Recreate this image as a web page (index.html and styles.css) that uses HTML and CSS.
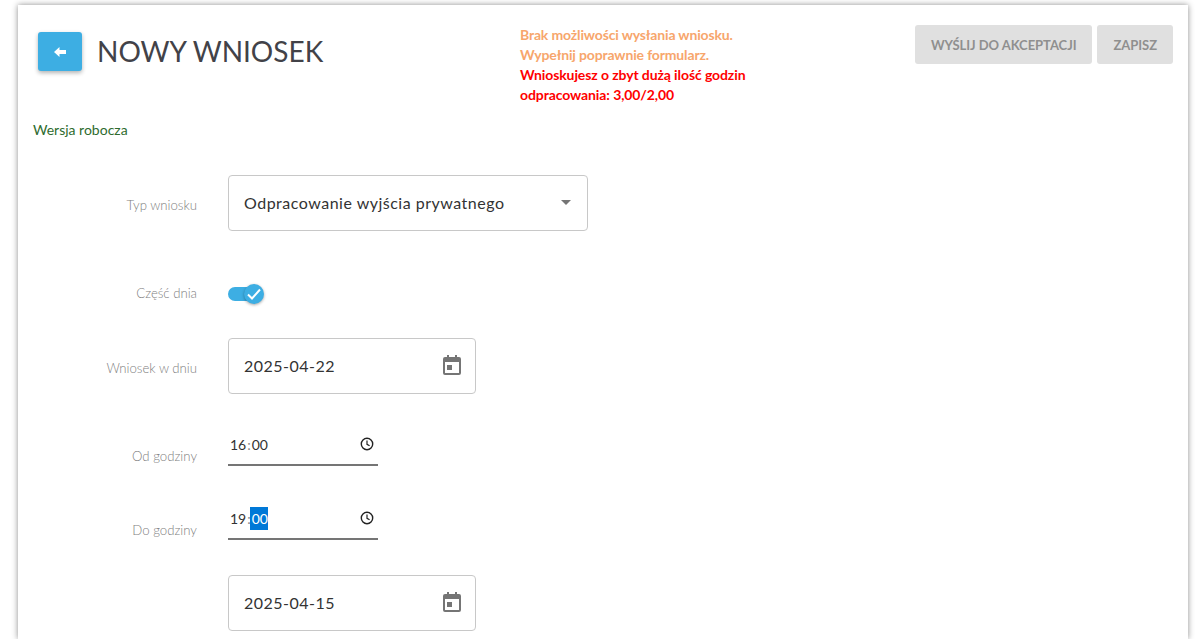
FILE: index.html
```html
<!DOCTYPE html>
<html lang="pl">
<head>
    <meta charset="UTF-8">
    <meta name="viewport" content="width=device-width, initial-scale=1.0">
    <title>Nowy wniosek</title>
    <link rel="stylesheet" href="styles.css">
</head>
<body>
    <div class="card">
        <div class="header">
            <div class="title-box">
                <button class="back-btn" type="button">
                    <svg width="12" height="10" viewBox="0 0 12 10"><path d="M0 5 L5.5 0 V3 H12 V7 H5.5 V10 Z" fill="#fff"/></svg>
                </button>
                <h1 class="title">NOWY WNIOSEK</h1>
            </div>
            <div class="messages">
                <div class="msg-warning">Brak możliwości wysłania wniosku.<br>Wypełnij poprawnie formularz.</div>
                <div class="msg-error">Wnioskujesz o zbyt dużą ilość godzin odpracowania: 3,00/2,00</div>
            </div>
            <div class="actions">
                <button class="action-btn" type="button">WYŚLIJ DO AKCEPTACJI</button>
                <button class="action-btn" type="button">ZAPISZ</button>
            </div>
        </div>

        <div class="status">Wersja robocza</div>

        <div class="form">
            <div class="row row-select">
                <div class="label">Typ wniosku</div>
                <div class="field field-select">
                    <span>Odpracowanie wyjścia prywatnego</span>
                    <span class="caret"></span>
                </div>
            </div>

            <div class="row row-toggle">
                <div class="label">Część dnia</div>
                <div class="toggle">
                    <div class="toggle-track"></div>
                    <div class="toggle-knob">
                        <svg width="14" height="12" viewBox="0 0 14 12"><path d="M1 6.5 L5 10.5 L13 1.5" fill="none" stroke="#fff" stroke-width="2"/></svg>
                    </div>
                </div>
            </div>

            <div class="row row-date">
                <div class="label">Wniosek w dniu</div>
                <div class="field field-date">
                    <span>2025-04-22</span>
                    <svg class="cal-icon" width="18" height="20" viewBox="0 0 18 20"><path d="M4 0h2v2h6V0h2v2h2a2 2 0 0 1 2 2v14a2 2 0 0 1-2 2H2a2 2 0 0 1-2-2V4a2 2 0 0 1 2-2h2zM2 7v11h14V7zm2 3h5v5H4z" fill="#757575" fill-rule="evenodd"/></svg>
                </div>
            </div>

            <div class="row row-time">
                <div class="label">Od godziny</div>
                <div class="time">
                    <span class="time-value">16<span class="time-sep">:</span>00</span>
                    <svg width="14" height="14" viewBox="0 0 14 14"><circle cx="7" cy="7" r="5.7" fill="none" stroke="#222" stroke-width="1.4"/><path d="M7 3.5V7.3L9.6 8.8" fill="none" stroke="#222" stroke-width="1.2"/></svg>
                </div>
            </div>

            <div class="row row-time">
                <div class="label">Do godziny</div>
                <div class="time">
                    <span class="time-value">19<span class="time-sep">:</span><span class="time-selected">00</span></span>
                    <svg width="14" height="14" viewBox="0 0 14 14"><circle cx="7" cy="7" r="5.7" fill="none" stroke="#222" stroke-width="1.4"/><path d="M7 3.5V7.3L9.6 8.8" fill="none" stroke="#222" stroke-width="1.2"/></svg>
                </div>
            </div>

            <div class="row row-date">
                <div class="label"></div>
                <div class="field field-date">
                    <span>2025-04-15</span>
                    <svg class="cal-icon" width="18" height="20" viewBox="0 0 18 20"><path d="M4 0h2v2h6V0h2v2h2a2 2 0 0 1 2 2v14a2 2 0 0 1-2 2H2a2 2 0 0 1-2-2V4a2 2 0 0 1 2-2h2zM2 7v11h14V7zm2 3h5v5H4z" fill="#757575" fill-rule="evenodd"/></svg>
                </div>
            </div>
        </div>
    </div>
</body>
</html>
```

FILE: styles.css
```css
html, body {
    height: 100%;
}

body {
    margin: 0;
    padding: 5px 7px 0 18px;
    box-sizing: border-box;
    background-color: white;
    font-family: 'Lato', sans-serif;
    overflow: hidden;
}

.card {
    background-color: white;
    height: 634px;
    padding: 20px 15px 0 15px;
    box-sizing: border-box;
    box-shadow: 0 0 6px rgba(0, 0, 0, 0.45);
}

.header {
    display: flex;
    align-items: flex-start;
}

.title-box {
    display: flex;
    align-items: center;
    width: 487px;
    padding: 7px 0 0 5px;
    box-sizing: border-box;
}

.back-btn {
    width: 44px;
    height: 39px;
    margin-right: 15px;
    border: none;
    border-radius: 3px;
    background-color: #3daee3;
    box-shadow: 0 2px 4px rgba(0, 0, 0, 0.3);
    display: flex;
    justify-content: center;
    align-items: center;
    padding: 0;
}

.title {
    margin: 0;
    font-size: 28px;
    font-weight: 400;
    color: #424248;
    line-height: 39px;
}

.messages {
    width: 240px;
    font-size: 14px;
    font-weight: 700;
    line-height: 20px;
    letter-spacing: -0.1px;
}

.msg-warning {
    color: #f7a66c;
    letter-spacing: -0.15px;
}

.msg-error {
    color: #ff0000;
}

.actions {
    display: flex;
    gap: 5px;
    margin-left: auto;
}

.action-btn {
    height: 39px;
    padding: 0 16px;
    border: none;
    border-radius: 3px;
    background-color: #e0e0e0;
    color: #8f8f8f;
    font-family: 'Lato', sans-serif;
    font-size: 13px;
    font-weight: 700;
    letter-spacing: -0.05px;
}

.status {
    margin-top: 15px;
    font-size: 14px;
    line-height: 20px;
    color: #2e6b2e;
}

.form {
    margin-top: 35px;
}

.row {
    display: flex;
}

.label {
    width: 164px;
    margin-right: 31px;
    text-align: right;
    font-size: 13.2px;
    font-weight: 300;
    color: #808080;
    flex-shrink: 0;
}

.field {
    height: 56px;
    box-sizing: border-box;
    padding: 0 15px 2px;
    border: 1px solid #c8c8c8;
    border-radius: 4px;
    display: flex;
    align-items: center;
    justify-content: space-between;
    font-size: 16px;
    letter-spacing: 0.5px;
    color: #333;
}

.field-select {
    width: 360px;
}

.field-date {
    width: 248px;
    padding-right: 14px;
}

.row-select, .row-date {
    align-items: center;
}

.row-select .label, .row-date .label {
    padding-top: 4px;
}

.row-select {
    margin-bottom: 51px;
}

.row-toggle {
    align-items: center;
    height: 24px;
    margin-bottom: 32px;
}

.row-toggle .label {
    padding-bottom: 2px;
}

.row-date {
    margin-bottom: 33px;
}

.row-time {
    height: 39px;
    margin-bottom: 35px;
    align-items: flex-end;
}

.row-time .label {
    padding-bottom: 2px;
}

.caret {
    width: 0;
    height: 0;
    margin-right: 1px;
    border-left: 5px solid transparent;
    border-right: 5px solid transparent;
    border-top: 5px solid #757575;
}

.toggle {
    position: relative;
    width: 36px;
    height: 24px;
}

.toggle-track {
    width: 26px;
    height: 14px;
    margin-top: 5px;
    border-radius: 7px;
    background-color: #3daee3;
}

.toggle-knob {
    position: absolute;
    top: 2px;
    left: 16px;
    width: 20px;
    height: 20px;
    border-radius: 50%;
    background-color: #3daee3;
    box-shadow: 0 1px 3px rgba(0, 0, 0, 0.35);
    display: flex;
    justify-content: center;
    align-items: center;
}

.time {
    width: 150px;
    height: 39px;
    box-sizing: border-box;
    padding: 0 4px 3px 2px;
    border-bottom: 2px solid #757575;
    display: flex;
    justify-content: space-between;
    align-items: center;
    font-size: 14px;
    color: #333;
}

.time-sep {
    margin: 0 1px;
    color: #888;
}

.time-selected {
    margin-left: -2px;
    padding: 3px 0 3px 2px;
    background-color: #0078d7;
    color: white;
}
```
